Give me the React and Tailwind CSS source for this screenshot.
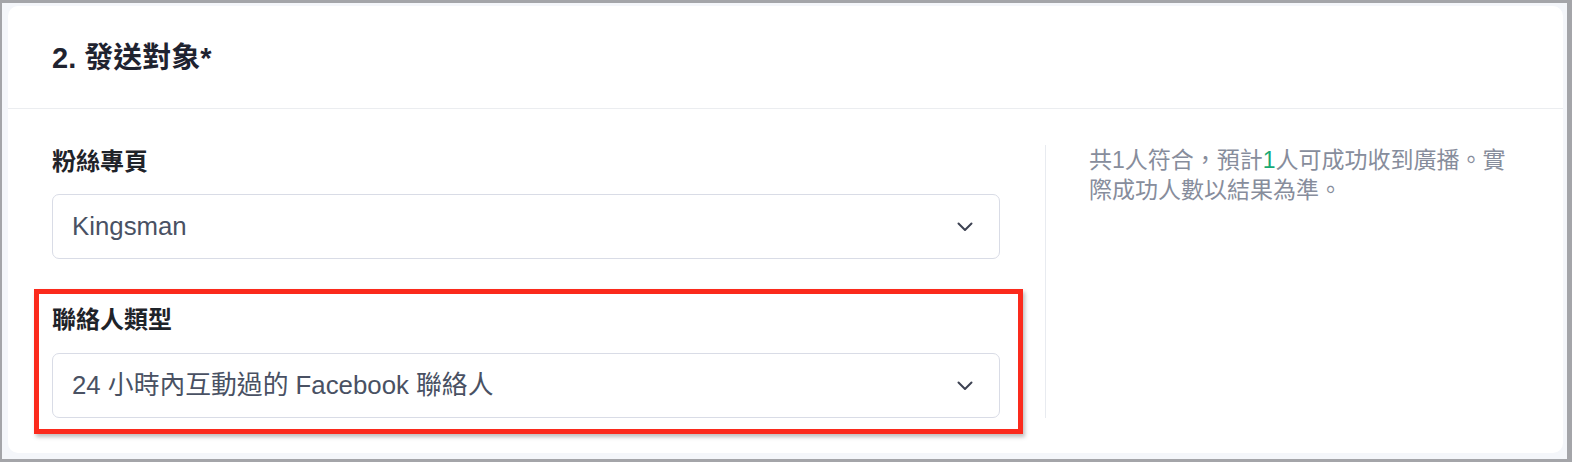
import React from 'react';

const font = { fontFamily: '"Liberation Sans", "Noto Sans CJK TC", sans-serif' };

const Chevron = () => (
  <svg width="16" height="10" viewBox="0 0 16 10" fill="none" className="shrink-0">
    <polyline points="1.5,1.5 8,8 14.5,1.5" stroke="#3d4252" strokeWidth="2" strokeLinecap="round" strokeLinejoin="round" />
  </svg>
);

const Select = ({ value }) => (
  <div className="flex items-center justify-between h-[65px] pl-[19px] pr-[26px] bg-white border border-[#d9dce6] rounded-[7px]">
    <span className="text-[25.8px] text-[#495163]">{value}</span>
    <Chevron />
  </div>
);

const App = () => {
  return (
    <div
      className="h-[462px] w-[1572px] border-t-[3px] border-l-[2px] border-r-[5px] border-b-[3px] border-[#a4a5a9] bg-[#f4f6fa] pt-[3px] pl-[6px] pr-[4px] pb-[6px]"
      style={font}
    >
      <div className="h-full bg-white rounded-[10px] flex flex-col">
        {/* Header */}
        <div className="h-[103px] flex items-center pl-[44px] pt-[4px] border-b border-[#ebedf0] shrink-0">
          <h2 className="text-[29px] font-bold text-[#1f2330]">2. 發送對象*</h2>
        </div>

        {/* Body */}
        <div className="flex pt-[37px] pb-[35px] pl-[44px]">
          <div className="w-[948px] shrink-0">
            <div className="text-[24px] leading-[32px] font-bold text-[#1f2329] mb-[16px]">粉絲專頁</div>
            <Select value="Kingsman" />

            <div className="relative mt-[45px]">
              <div className="text-[24px] leading-[32px] font-bold text-[#1f2329] mb-[17px]">聯絡人類型</div>
              <Select value="24 小時內互動過的 Facebook 聯絡人" />
              <div className="absolute -top-[15px] -bottom-[16px] -left-[18px] -right-[23px] border-[5px] border-[#fb2a1c] shadow-[2px_3px_4px_rgba(0,0,0,0.25)] pointer-events-none" />
            </div>
          </div>

          <div className="ml-[45px] flex-1 border-l border-[#e8ebf0] pl-[43px] pr-[48px] -mt-[1px]">
            <p className="text-[23px] leading-[30px] text-[#878d9c]">
              共1人符合，預計<span className="text-[#19a974]">1</span>人可成功收到廣播。實際成功人數以結果為準。
            </p>
          </div>
        </div>
      </div>
    </div>
  );
};

export default App;
